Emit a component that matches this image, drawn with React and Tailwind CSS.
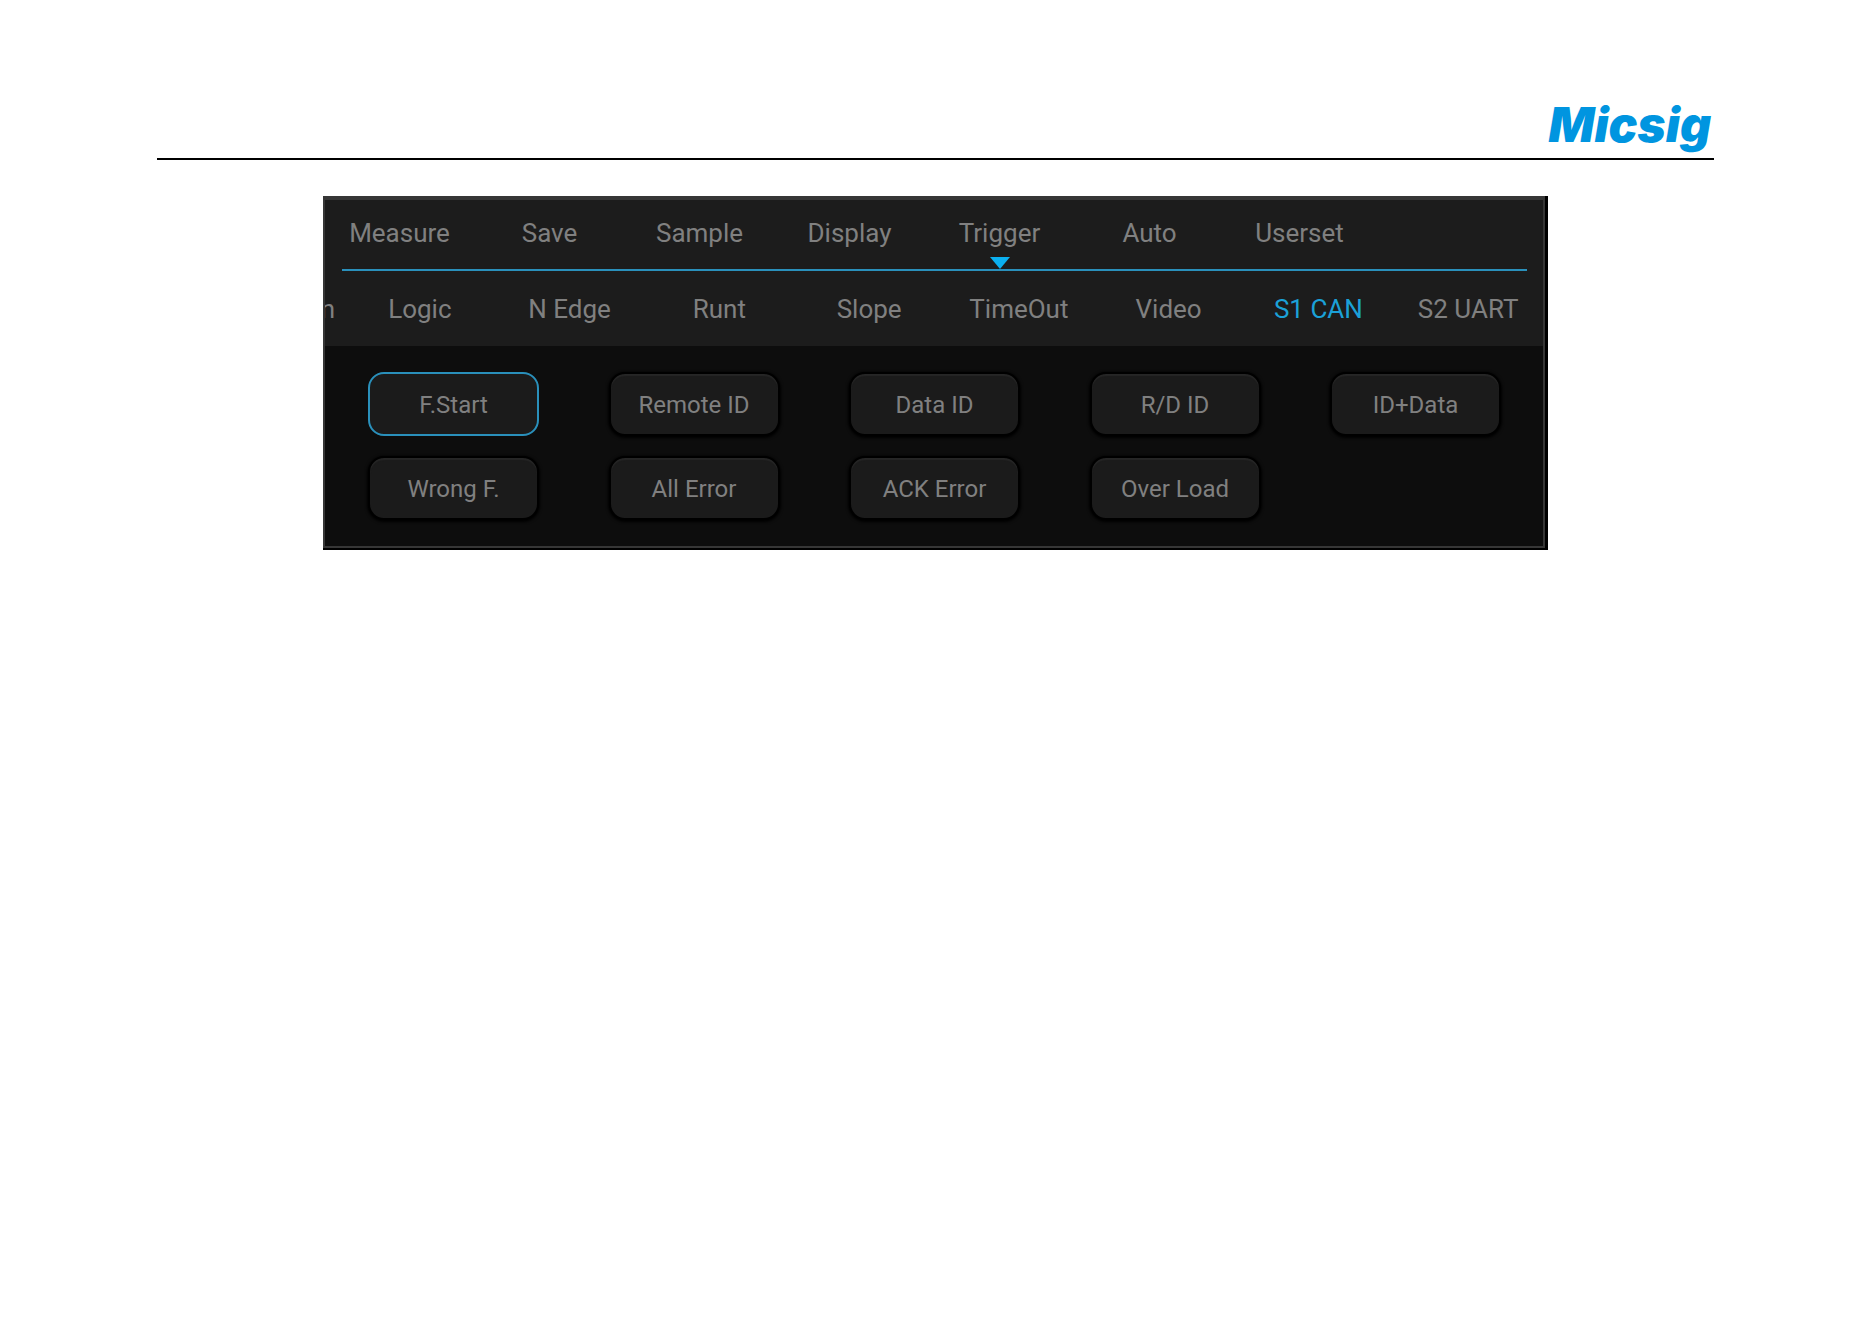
import React, { useState } from "react";

const menuTabs = ["Measure", "Save", "Sample", "Display", "Trigger", "Auto", "Userset"];

const triggerTabs = ["Logic", "N Edge", "Runt", "Slope", "TimeOut", "Video", "S1 CAN", "S2 UART"];

const conditions = [
  "F.Start",
  "Remote ID",
  "Data ID",
  "R/D ID",
  "ID+Data",
  "Wrong F.",
  "All Error",
  "ACK Error",
  "Over Load",
];

export default function App() {
  const [menu, setMenu] = useState("Trigger");
  const [trigger, setTrigger] = useState("S1 CAN");
  const [condition, setCondition] = useState("F.Start");

  return (
    <div className="min-h-screen bg-white pt-[96px] pr-[158px] pl-[157px] font-['Roboto',sans-serif]">
      {/* Page header */}
      <header className="flex h-16 items-start justify-end border-b-2 border-black pr-[3px]">
        <div className="font-['Inter',sans-serif] text-[48px] leading-[58px] font-black text-[#0095e0] italic">
          Micsig
        </div>
      </header>

      {/* Oscilloscope menu */}
      <main className="mx-[166px] mt-9 bg-black pr-[3px] pb-[2px]">
        <div className="border-2 border-t-4 border-[#363636] bg-[#0d0d0d]">
          <div className="bg-[#1c1c1c]">
            {/* Main menu */}
            <nav className="flex h-[69px]">
              {menuTabs.map((tab) => (
                <button
                  key={tab}
                  onClick={() => setMenu(tab)}
                  className="relative w-[150px] pr-px pb-[2px] text-[26px] text-[#808080]"
                >
                  {tab}
                  {tab === menu && (
                    <svg
                      viewBox="0 0 20 12"
                      className="absolute bottom-0 left-1/2 h-3 w-5 -translate-x-1/2 fill-[#0bb0f0]"
                    >
                      <path d="M0 0h20L10 12z" />
                    </svg>
                  )}
                </button>
              ))}
            </nav>
            <div className="mr-4 ml-[17px] h-[2px] bg-[#2a90bb]" />

            {/* Trigger types, scrolled to the right end */}
            <nav className="flex h-[75px] overflow-hidden">
              <button className="flex w-5 shrink-0 items-center justify-end pt-px pr-[10px] text-[26px] text-[#808080]">
                n
              </button>
              {triggerTabs.map((tab) => (
                <button
                  key={tab}
                  onClick={() => setTrigger(tab)}
                  className={`flex-1 pt-px text-[26px] ${
                    tab === trigger ? "text-[#1ba1d8]" : "text-[#808080]"
                  }`}
                >
                  {tab}
                </button>
              ))}
            </nav>
          </div>

          {/* Trigger conditions */}
          <div className="grid grid-cols-[repeat(5,171px)] justify-between gap-y-5 pt-[26px] pr-[42px] pb-[26px] pl-[43px]">
            {conditions.map((item) => (
              <button
                key={item}
                onClick={() => setCondition(item)}
                className={`h-16 rounded-2xl border-2 bg-[#1b1b1b] pt-[2px] text-[24px] text-[#808080] ${
                  item === condition
                    ? "border-[#2a90bb]"
                    : "border-black shadow-[inset_0_2px_1px_#262626,0_1px_3px_1px_#000]"
                }`}
              >
                {item}
              </button>
            ))}
          </div>
        </div>
      </main>
    </div>
  );
}
